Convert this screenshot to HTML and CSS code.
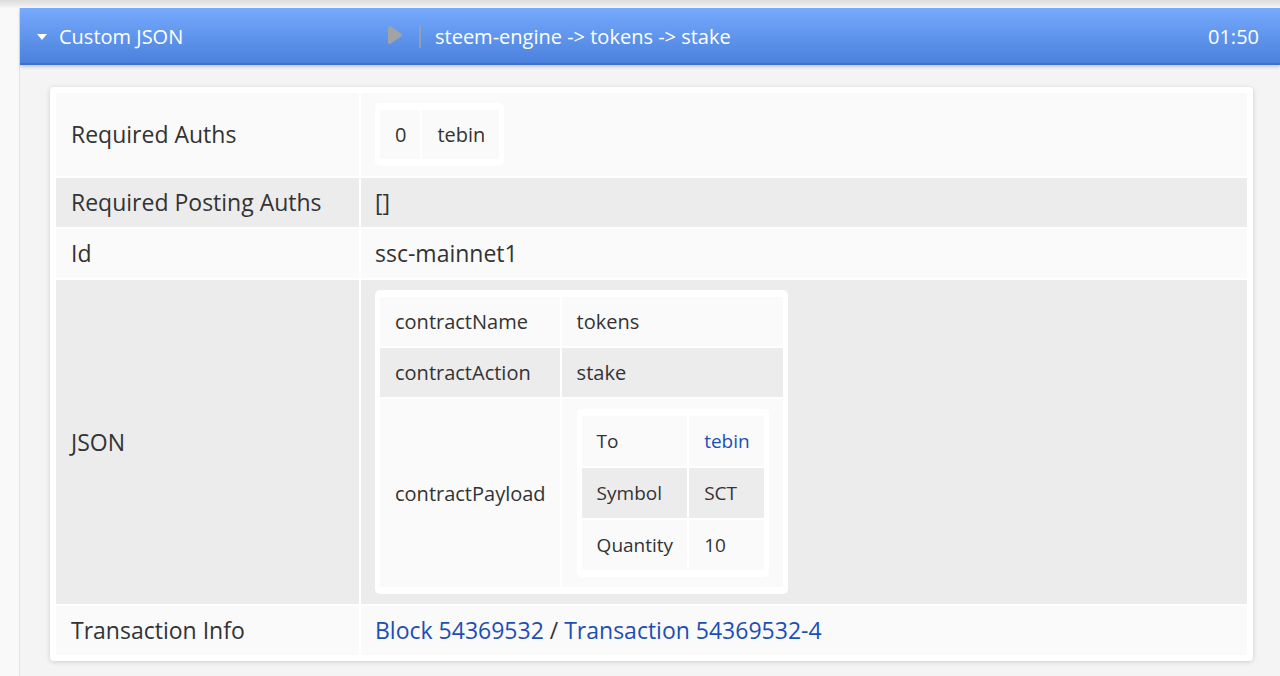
FILE: index.html
```html
<!DOCTYPE html>
<html>
<head>
<meta charset="utf-8">
<link rel="stylesheet" href="styles.css">
</head>
<body>
<div class="topstrip"></div>
<div class="layout">
  <div class="gutter"></div>
  <div class="main">
    <div class="header">
      <div class="hd-left">
        <span class="caret"></span>
        <span class="title">Custom JSON</span>
      </div>
      <svg class="play" width="16" height="20" viewBox="0 0 16 20"><polygon points="2.5,2.5 13.5,10 2.5,17.5" fill="#a3a3a3" stroke="#a3a3a3" stroke-width="3" stroke-linejoin="round"/></svg>
      <span class="sep"></span>
      <span class="path">steem-engine -&gt; tokens -&gt; stake</span>
      <span class="time">01:50</span>
    </div>
    <div class="content">
      <div class="card">
        <table class="tbl">
          <tr class="odd">
            <td class="lbl">Required Auths</td>
            <td class="val">
              <div class="nest">
                <table class="ntbl">
                  <tr class="odd"><td>0</td><td>tebin</td></tr>
                </table>
              </div>
            </td>
          </tr>
          <tr class="even">
            <td class="lbl">Required Posting Auths</td>
            <td class="val">[]</td>
          </tr>
          <tr class="odd">
            <td class="lbl">Id</td>
            <td class="val">ssc-mainnet1</td>
          </tr>
          <tr class="even">
            <td class="lbl">JSON</td>
            <td class="val">
              <div class="nest">
                <table class="ntbl">
                  <tr class="odd"><td>contractName</td><td>tokens</td></tr>
                  <tr class="even"><td>contractAction</td><td>stake</td></tr>
                  <tr class="odd"><td>contractPayload</td><td>
                    <div class="nest nest-sm">
                      <table class="ntbl">
                        <tr class="odd"><td>To</td><td><a class="link" href="#">tebin</a></td></tr>
                        <tr class="even"><td>Symbol</td><td>SCT</td></tr>
                        <tr class="odd"><td>Quantity</td><td>10</td></tr>
                      </table>
                    </div>
                  </td></tr>
                </table>
              </div>
            </td>
          </tr>
          <tr class="odd">
            <td class="lbl">Transaction Info</td>
            <td class="val"><a class="link" href="#">Block 54369532</a> / <a class="link" href="#">Transaction 54369532-4</a></td>
          </tr>
        </table>
      </div>
    </div>
  </div>
</div>
</body>
</html>
```
FILE: styles.css
```css
html, body {
  margin: 0;
  padding: 0;
  height: 100%;
}
body {
  font-family: "Open Sans", "Noto Sans", sans-serif;
  font-size: 20px;
  color: #333;
  background: #f4f4f4;
  overflow: hidden;
}
.topstrip {
  height: 8px;
  background: linear-gradient(#dcdcdc, #ececec 70%, #f8f8f8);
}
.layout {
  display: flex;
  height: calc(100% - 8px);
}
.gutter {
  width: 20px;
  flex: none;
  background: #f9f9f9;
  border-right: 1px solid #e4e4e4;
  box-sizing: border-box;
}
.main {
  flex: 1;
  display: flex;
  flex-direction: column;
  min-width: 0;
}
.header {
  height: 52px;
  display: flex;
  align-items: center;
  background: linear-gradient(#76aafd, #4b81dd);
  border-bottom: 2px solid #3d72cc;
  box-shadow: 0 2px 3px rgba(0,0,0,0.18);
  color: #fff;
  padding: 3px 21px 0 17px;
  box-sizing: content-box;
  position: relative;
  z-index: 1;
}
.hd-left {
  width: 350px;
  display: flex;
  align-items: center;
  flex: none;
}
.caret {
  width: 0;
  height: 0;
  border-left: 5px solid transparent;
  border-right: 5px solid transparent;
  border-top: 6px solid #fff;
  margin-right: 12px;
  margin-top: 0;
}
.title {
  line-height: 28px;
}
.play {
  display: block;
  flex: none;
  margin-top: -4px;
}
.sep {
  width: 2px;
  height: 23px;
  background: rgba(160,160,170,0.75);
  margin: -2px 14px 0 16px;
  flex: none;
}
.path {
  line-height: 28px;
}
.time {
  margin-left: auto;
  line-height: 28px;
}
.content {
  flex: 1;
  padding: 22px 27px 0 30px;
}
.card {
  background: #fff;
  border-radius: 4px;
  padding: 4px;
  box-shadow: 0 1px 5px rgba(0,0,0,0.16);
}
.tbl {
  width: 100%;
  border-collapse: separate;
  border-spacing: 2px;
  font-size: 23px;
}
td {
  padding: 10px 15px;
  line-height: 29px;
  vertical-align: middle;
  white-space: nowrap;
}
tr.odd > td {
  background: #fafafa;
}
tr.even > td {
  background: #ececec;
}
.tbl > tbody > tr > td.lbl {
  width: 273px;
}
.tbl > tbody > tr > td.val {
  padding-left: 14px;
}
.nest {
  display: inline-block;
  background: #fff;
  border-radius: 5px;
  padding: 5px 3px;
  vertical-align: middle;
  font-size: 20px;
}
.nest-sm {
  font-size: 19px;
}
.ntbl {
  border-collapse: separate;
  border-spacing: 2px;
}
.ntbl td {
  padding: 10px 14px 10px 15px;
  line-height: 29px;
}
.nest-sm .ntbl td {
  line-height: 30px;
}
.link {
  color: #1c4fb5;
  text-decoration: none;
}
```
